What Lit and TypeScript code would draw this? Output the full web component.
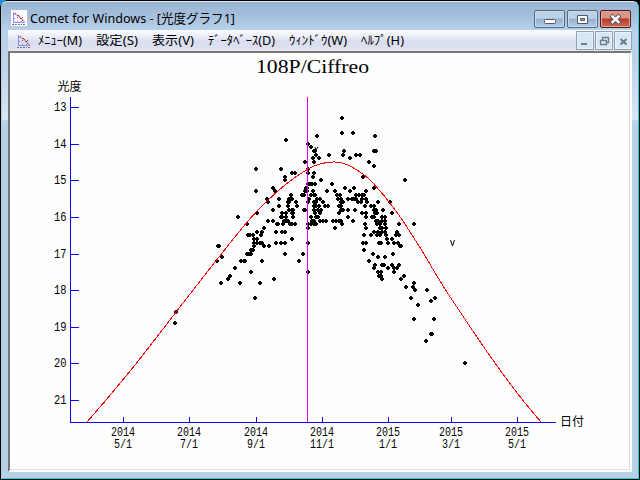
import { LitElement, html, svg, css } from "lit";
import { customElement, property } from "lit/decorators.js";

// Observed magnitudes: each row is a magnitude and the x positions on the date axis.
const OBSERVATIONS: [number, number[]][] = [
  [13.3, [342]],
  [13.7, [342, 353]],
  [13.8, [317, 375]],
  [13.9, [286]],
  [14.0, [308]],
  [14.1, [311]],
  [14.2, [314, 315, 344, 374, 376]],
  [14.3, [316, 329, 343, 356, 360]],
  [14.4, [313, 319, 350]],
  [14.5, [305, 314, 369]],
  [14.6, [374]],
  [14.7, [256, 281, 308]],
  [14.8, [292, 295, 308, 314]],
  [14.9, [285, 313, 363]],
  [15.0, [285, 321, 405]],
  [15.1, [308, 310, 312, 315, 332]],
  [15.2, [273, 306, 307, 345, 354, 374]],
  [15.3, [256, 275, 305, 307, 313, 327, 335, 350, 366]],
  [15.4, [291, 302, 304, 311, 314, 315, 337, 340, 356, 359, 362, 364]],
  [15.5, [267, 279, 289, 291, 292, 309, 317, 320, 338, 341, 348, 352, 354, 356, 362, 366]],
  [15.6, [268, 288, 289, 296, 308, 314, 316, 323, 341, 343, 358, 361, 367, 378, 390]],
  [15.7, [279, 288, 297, 314, 316, 319, 325, 328, 339, 341, 365, 371, 374]],
  [15.8, [273, 289, 292, 293, 304, 305, 314, 318, 321, 341, 343, 348, 355, 374, 376, 383]],
  [15.9, [257, 282, 286, 292, 293, 315, 320, 339, 362, 366, 375, 377, 392]],
  [16.0, [238, 281, 282, 286, 293, 311, 316, 318, 348, 366, 372, 374, 382, 385]],
  [16.1, [268, 273, 284, 286, 288, 312, 314, 320, 323, 326, 333, 336, 339, 341, 353, 376, 378, 382, 385]],
  [16.2, [247, 277, 278, 283, 290, 292, 295, 308, 311, 314, 316, 342, 365, 377, 380, 385, 399, 414]],
  [16.3, [264, 308, 335, 366, 380, 382, 386]],
  [16.4, [257, 262, 276, 282, 285, 374, 378, 382, 385, 397]],
  [16.5, [248, 250, 253, 261, 364, 371, 377, 380, 386, 396, 399]],
  [16.6, [254, 257, 292, 387, 392]],
  [16.7, [254, 257, 260, 262, 276, 281, 285, 308, 363, 366, 379, 381, 388, 394, 398]],
  [16.8, [218, 219, 254, 264, 269, 400, 401]],
  [16.9, [251, 253, 364]],
  [17.0, [247, 249, 251, 285, 303, 373, 393]],
  [17.1, [222, 378, 385]],
  [17.2, [217, 241, 244, 245, 262, 299, 369]],
  [17.3, [375, 382, 384, 392, 399]],
  [17.4, [235, 374, 388, 394, 397]],
  [17.5, [251, 308, 378, 381, 394]],
  [17.6, [230, 379, 381, 404]],
  [17.7, [228, 274, 382, 401]],
  [17.8, [221, 240, 260, 414]],
  [17.9, [406, 413]],
  [18.0, [415, 427]],
  [18.2, [255, 411, 435]],
  [18.3, [431]],
  [18.4, [418]],
  [18.6, [176]],
  [18.8, [414, 434]],
  [18.9, [175]],
  [19.2, [431, 432]],
  [19.4, [426]],
  [20.0, [465]],
];

const DATES: [number, string, string][] = [
  [123, "2014", "5/1"],
  [189, "2014", "7/1"],
  [256, "2014", "9/1"],
  [322, "2014", "11/1"],
  [388, "2015", "1/1"],
  [451, "2015", "3/1"],
  [517, "2015", "5/1"],
];

const CURVE: [number, number][] = [
  [87, 422], [106, 400], [135, 365], [163, 329], [190, 294], [217, 259.5], [241, 229.5],
  [259, 209], [285, 185], [308, 169], [322, 163.5], [335, 162], [346, 164.2], [358, 170.7],
  [372, 182], [396, 211], [419, 246], [445, 289], [479, 340], [500, 370], [523, 400.5], [541, 422],
];

const DOT = "h2v1h1v2h-1v1h-2v-1h-1v-2h1z";
const magY = (m: number) => Math.round(107.2 + (m - 13) * 36.6);

const dotPath = OBSERVATIONS.map(([m, xs]) =>
  xs.map((x) => `M${x - 1} ${magY(m) - 2}${DOT}`).join("")
).join("");

function smooth(p: [number, number][]): string {
  let d = `M${p[0]}`;
  for (let i = 0; i < p.length - 1; i++) {
    const a = p[i - 1] ?? p[i], b = p[i], c = p[i + 1], e = p[i + 2] ?? c;
    d += `C${b[0] + (c[0] - a[0]) / 6} ${b[1] + (c[1] - a[1]) / 6} ` +
      `${c[0] - (e[0] - b[0]) / 6} ${c[1] - (e[1] - b[1]) / 6} ${c[0]} ${c[1]}`;
  }
  return d;
}

// One line of text fitted to an exact width.
@customElement("fit-label")
class FitLabel extends LitElement {
  @property() text = "";
  @property({ type: Number }) width = 40;
  @property({ type: Number }) size = 12;
  static styles = css`
    :host { display: block; height: 18px; }
    svg { display: block; overflow: visible; }
    text { font-family: "Noto Sans", "Noto Sans CJK JP", sans-serif; fill: #000; }
  `;
  render() {
    return html`<svg width=${this.width} height="18">
      <text x="0" y="13.5" font-size=${this.size} textLength=${this.width} lengthAdjust="spacingAndGlyphs">${this.text}</text>
    </svg>`;
  }
}

@customElement("chart-icon")
class ChartIcon extends LitElement {
  static styles = css`
    :host { display: block; width: 16px; height: 16px; }
    svg { display: block; }
  `;
  render() {
    return html`<svg width="16" height="16" viewBox="0 0 16 16">
      <path d="M2.500 2V12.500H14M2 4.500H4M2 8.500H4M6.500 12V11M10.500 12V11" fill="none" stroke="#8c8cf6" shape-rendering="crispEdges" />
      <path d="M3 3.500L7 5.500L10 8.500L13.500 11.500" fill="none" stroke="#e89a9a" stroke-width="1.300" />
      <path d="M4 3h1v1h-1zM6 5h2v1h-2zM6 7h1v1h-1zM8 6h1v1h-1zM9 8h2v1h-2zM11 7h1v1h-1zM11 10h1v1h-1z" fill="#8a4650" />
      <path d="M1 14h2v1h-2zM4 14h2v1h-2zM7 14h2v1h-2zM10 14h1v1h-1zM12 14h2v1h-2z" fill="#777" />
    </svg>`;
  }
}

@customElement("light-curve")
class LightCurve extends LitElement {
  static styles = css`
    :host { display: block; }
    svg { display: block; }
    .crisp { shape-rendering: crispEdges; }
    .axis { stroke: #1000ff; fill: none; }
    .tick { font: 13px "Liberation Mono", monospace; fill: #000; }
    .name { font: 12px "Noto Sans CJK JP", sans-serif; fill: #000; }
    .title { font: 18.5px "Liberation Serif", serif; fill: #000; }
  `;
  render() {
    const mags = [13, 14, 15, 16, 17, 18, 19, 20, 21];
    const axis = "M70.5 97V422.5H556" +
      mags.map((m) => `M71 ${magY(m) + 0.5}H79`).join("") +
      DATES.map(([x]) => `M${x + 0.5} 417V422`).join("");
    return html`<svg width="620" height="417" viewBox="10 53 620 417">
      <text class="title" x="256" y="73.3" textLength="113" lengthAdjust="spacingAndGlyphs">108P/Ciffreo</text>
      <text class="name" x="57.5" y="91.300" textLength="24" lengthAdjust="spacingAndGlyphs">光度</text>
      <text class="name" x="560" y="426" textLength="24" lengthAdjust="spacingAndGlyphs">日付</text>
      <path class="crisp" d=${dotPath} fill="#000" />
      <path class="crisp" d="M307.5 97V422" stroke="#e000e0" />
      <path class="crisp" d=${smooth(CURVE)} stroke="#ff0000" fill="none" />
      <path class="crisp axis" d=${axis} />
      <path d="M315 147L316 150L318 147M450.5 240L452.5 246L454.5 240" fill="none" stroke="#000" />
      ${mags.map((m) => svg`<text class="tick" x="54" y=${magY(m) + 4.2} textLength="12.5" lengthAdjust="spacingAndGlyphs">${m}</text>`)}
      ${DATES.map(([x, year, day]) => svg`
        <text class="tick" x=${x - 12} y="436" textLength="24" lengthAdjust="spacingAndGlyphs">${year}</text>
        <text class="tick" x=${x - day.length * 3} y="448" textLength=${day.length * 6} lengthAdjust="spacingAndGlyphs">${day}</text>`)}
    </svg>`;
  }
}

@customElement("app-root")
class AppRoot extends LitElement {
  static styles = css`
    :host { display: block; width: 640px; height: 480px; background: #1a1a1c; overflow: hidden; }
    .desk { height: 480px; box-sizing: border-box; padding: 1px 1px 1px 1px; background: linear-gradient(135deg, #2a8fd0 0 4px, #000 5px); }
    .window {
      height: 478px; box-sizing: border-box; border: 1px solid #2dd0e0; border-top-color: #dcebf8;
      border-left-color: #b5ccdf; border-radius: 6px 6px 0 0; display: flex; flex-direction: column;
      background: linear-gradient(#98b5d3 0, #a3bedb 12px, #b8d1ea 28px, #bdd3ec 60px, #d3e3f3 110px, #dce9f6 117px, #b7d1e8 119px);
      padding: 0 6px 6px;
    }
    .titlebar { height: 28px; display: flex; align-items: flex-start; padding: 8px 1px 0 3px; box-sizing: border-box; }
    .badge { background: #fff; width: 16px; height: 16px; margin-right: 3px; }
    .caption { margin: -1px auto 0 0; }
    .btn { width: 31px; height: 18px; box-sizing: border-box; margin-left: 2px; border: 1px solid #53687f; border-radius: 2px;
      box-shadow: inset 0 0 0 1px #c9dcee; background: linear-gradient(#bdd1e6 0 45%, #94b0cf 50%, #b2cce5); }
    .close { border-color: #4a1820; box-shadow: inset 0 0 0 1px #e3a49a; background: linear-gradient(#dc9688 0 42%, #b93a26 50%, #cf6a50); }
    .btn svg, .mdi svg { display: block; }
    .menubar { height: 21px; display: flex; background: linear-gradient(#fbfcfe, #eceff8 6px, #dadff0 11px, #dbdff1 17px, #e6e8f4); }
    .menu { display: flex; gap: 14px; padding: 1px 0 0 6px; margin-right: auto; }
    .small { margin: 3px 0 0 8px; }
    .mdi { width: 18px; height: 19px; box-sizing: border-box; border: 1px solid #929faf; box-shadow: inset 0 0 0 1px #e8f2fb;
      background: #d8e7f5; margin: 1px 0 0 1px; }
    .client { height: 417px; background: #fdfefd; border: solid; border-width: 2px 2px 2px 2px;
      border-color: #777674 #fff #fff #777674; box-sizing: content-box; overflow: hidden;
      box-shadow: inset -1px -1px 0 #e1dfdc; }
  `;
  render() {
    const menus: [string, number][] = [
      ["ﾒﾆｭｰ(M)", 44], ["設定(S)", 42], ["表示(V)", 42], ["ﾃﾞｰﾀﾍﾞｰｽ(D)", 67], ["ｳｨﾝﾄﾞｳ(W)", 58], ["ﾍﾙﾌﾟ(H)", 43],
    ];
    return html`<div class="desk"><div class="window">
      <div class="titlebar">
        <div class="badge"><chart-icon></chart-icon></div>
        <fit-label class="caption" text="Comet for Windows - [光度グラフ1]" .width=${205} .size=${13}></fit-label>
        <div class="btn"><svg width="29" height="16"><rect x="9.5" y="8.5" width="11" height="4" rx="1" fill="#fff" stroke="#535666" /></svg></div>
        <div class="btn"><svg width="29" height="16"><path d="M9.5 4.5h10v8h-10z" fill="#fff" stroke="#535666" /><path d="M12.5 7.5h4v2h-4z" fill="#8eabc9" stroke="#535666" /></svg></div>
        <div class="btn close"><svg width="29" height="16"><path d="M11.500 5.500L17.500 11M17.500 5.500L11.500 11" stroke="#535666" stroke-width="4.2" stroke-linecap="square" /><path d="M11.500 5.500L17.500 11M17.500 5.500L11.500 11" stroke="#fff" stroke-width="2.4" stroke-linecap="square" /></svg></div>
      </div>
      <div class="menubar">
        <chart-icon class="small"></chart-icon>
        <div class="menu">${menus.map(([t, w]) => html`<fit-label .text=${t} .width=${w} .size=${12.5}></fit-label>`)}</div>
        <div class="mdi"><svg width="16" height="17"><path d="M4 12h6" stroke="#6c7d90" stroke-width="2" /></svg></div>
        <div class="mdi"><svg width="16" height="17"><path d="M6.5 8V5.500h6v5h-2M6 5.500h7M4.500 8.500h6v4h-6zM4 8.500h7" fill="none" stroke="#6c7d90" stroke-width="1.300" /></svg></div>
        <div class="mdi"><svg width="16" height="17"><path d="M5.500 7L11.500 12.500M11.500 7L5.500 12.500" stroke="#6c7d90" stroke-width="2.200" /></svg></div>
      </div>
      <div class="client"><light-curve></light-curve></div>
    </div></div>`;
  }
}
